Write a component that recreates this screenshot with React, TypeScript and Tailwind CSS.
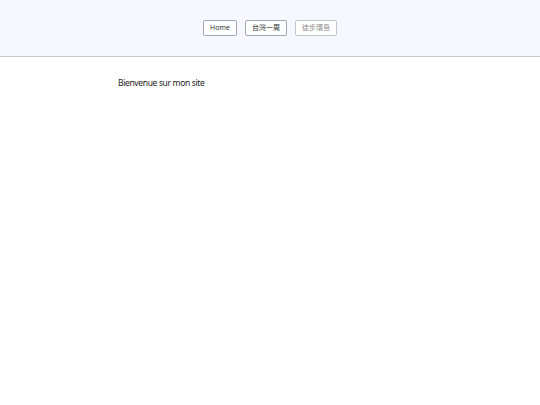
export default function App() {
  return (
    <div className="min-h-screen bg-white font-['Open_Sans','Noto_Sans_CJK_TC',sans-serif] text-[#222]">
      <header className="flex h-[57px] items-center justify-center gap-2 border-b border-[#c8c8d2] bg-[#f5f8ff] pb-[1px]">
        <button className="h-4 w-[34px] rounded-[2px] border border-[#a6a6b2] bg-white text-[7px] leading-none text-[#222]">
          Home
        </button>
        <button className="h-4 w-[42px] rounded-[2px] border border-[#a6a6b2] bg-white text-[7px] leading-none text-[#333]">
          台灣一周
        </button>
        <button className="h-4 w-[42px] rounded-[2px] border border-[#c4c4cc] bg-white text-[7px] leading-none text-[#8a8a8a]">
          徒步環島
        </button>
      </header>
      <main className="px-[118px] pt-[20px]">
        <p className="font-['Noto_Sans',sans-serif] text-[8.5px] leading-[12px] tracking-[-0.35px]">
          Bienvenue sur mon site
        </p>
      </main>
    </div>
  );
}
